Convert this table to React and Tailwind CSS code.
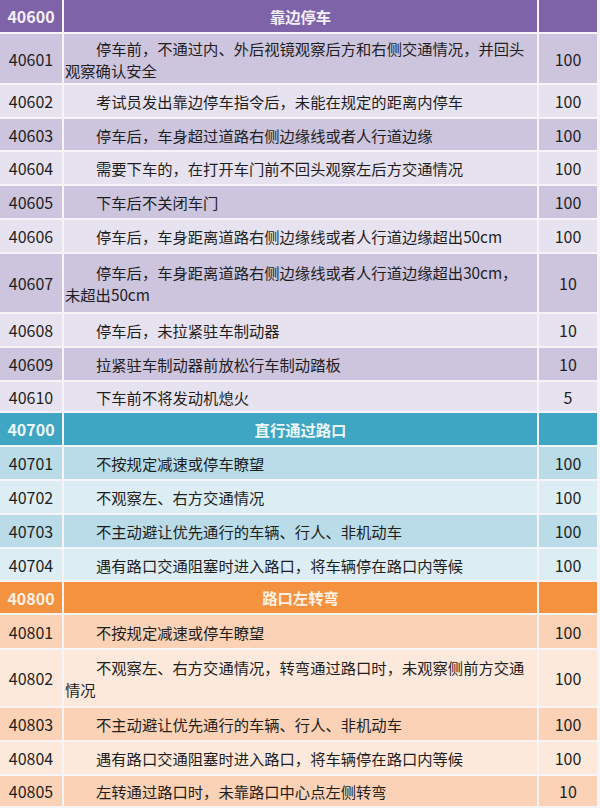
import React from "react";

const themes = {
  purple: { head: "bg-[#7e63a9]", odd: "bg-[#cdc4de]", even: "bg-[#e7e2ef]", headText: "text-[#f4f0f8]" },
  teal: { head: "bg-[#3ea5c3]", odd: "bg-[#b9dce8]", even: "bg-[#dcedf4]", headText: "text-[#eef8fb]" },
  orange: { head: "bg-[#f4923f]", odd: "bg-[#fbd2b5]", even: "bg-[#fde9db]", headText: "text-[#fff1e6]" },
};

const sections = [
  {
    theme: "purple",
    code: "40600",
    title: "靠边停车",
    h: "h-[32px]",
    rows: [
      { code: "40601", lines: ["停车前，不通过内、外后视镜观察后方和右侧交通情况，并回头", "观察确认安全"], score: "100", h: "h-[49px]" },
      { code: "40602", lines: ["考试员发出靠边停车指令后，未能在规定的距离内停车"], score: "100", h: "h-[32px]" },
      { code: "40603", lines: ["停车后，车身超过道路右侧边缘线或者人行道边缘"], score: "100", h: "h-[31px]" },
      { code: "40604", lines: ["需要下车的，在打开车门前不回头观察左后方交通情况"], score: "100", h: "h-[32px]" },
      { code: "40605", lines: ["下车后不关闭车门"], score: "100", h: "h-[32px]" },
      { code: "40606", lines: ["停车后，车身距离道路右侧边缘线或者人行道边缘超出50cm"], score: "100", h: "h-[32px]" },
      { code: "40607", lines: ["停车后，车身距离道路右侧边缘线或者人行道边缘超出30cm，", "未超出50cm"], score: "10", h: "h-[58px]" },
      { code: "40608", lines: ["停车后，未拉紧驻车制动器"], score: "10", h: "h-[32px]" },
      { code: "40609", lines: ["拉紧驻车制动器前放松行车制动踏板"], score: "10", h: "h-[32px]" },
      { code: "40610", lines: ["下车前不将发动机熄火"], score: "5", h: "h-[29px]" },
    ],
  },
  {
    theme: "teal",
    code: "40700",
    title: "直行通过路口",
    h: "h-[32px]",
    rows: [
      { code: "40701", lines: ["不按规定减速或停车瞭望"], score: "100", h: "h-[32px]" },
      { code: "40702", lines: ["不观察左、右方交通情况"], score: "100", h: "h-[32px]" },
      { code: "40703", lines: ["不主动避让优先通行的车辆、行人、非机动车"], score: "100", h: "h-[32px]" },
      { code: "40704", lines: ["遇有路口交通阻塞时进入路口，将车辆停在路口内等候"], score: "100", h: "h-[31px]" },
    ],
  },
  {
    theme: "orange",
    code: "40800",
    title: "路口左转弯",
    h: "h-[31px]",
    rows: [
      { code: "40801", lines: ["不按规定减速或停车瞭望"], score: "100", h: "h-[33px]" },
      { code: "40802", lines: ["不观察左、右方交通情况，转弯通过路口时，未观察侧前方交通", "情况"], score: "100", h: "h-[56px]" },
      { code: "40803", lines: ["不主动避让优先通行的车辆、行人、非机动车"], score: "100", h: "h-[32px]" },
      { code: "40804", lines: ["遇有路口交通阻塞时进入路口，将车辆停在路口内等候"], score: "100", h: "h-[32px]" },
      { code: "40805", lines: ["左转通过路口时，未靠路口中心点左侧转弯"], score: "10", h: "h-[30px]" },
    ],
  },
];

const rowGrid = "grid grid-cols-[62px_473px_58px] gap-x-[2px] mb-[2px]";

function HeaderRow({ s }) {
  const t = themes[s.theme];
  return (
    <div className={`${rowGrid} ${s.h}`}>
      <div className={`${t.head} ${t.headText} flex items-center justify-center font-bold text-[16px]`}>{s.code}</div>
      <div className={`${t.head} ${t.headText} flex items-center justify-center font-bold text-[15.3px]`}>{s.title}</div>
      <div className={`${t.head}`}></div>
    </div>
  );
}

function DataRow({ r, bg }) {
  return (
    <div className={`${rowGrid} ${r.h}`}>
      <div className={`${bg} flex items-center justify-center text-[16px]`}>{r.code}</div>
      <div className={`${bg} flex flex-col justify-center pl-[1px] text-[15.3px] leading-[22px]`}>
        {r.lines.map((l, i) => (
          <div key={i} className={`whitespace-nowrap ${i === 0 ? "pl-[31px]" : ""}`}>{l}</div>
        ))}
      </div>
      <div className={`${bg} flex items-center justify-center text-[16px]`}>{r.score}</div>
    </div>
  );
}

export default function App() {
  return (
    <div
      className="w-[600px] h-[808px] overflow-hidden bg-[#f6f4f7] text-[#1e1e1e]"
      style={{ fontFamily: '"Noto Sans CJK SC", "Noto Sans", sans-serif' }}
    >
      {sections.map((s) => {
        const t = themes[s.theme];
        return (
          <React.Fragment key={s.code}>
            <HeaderRow s={s} />
            {s.rows.map((r, i) => (
              <DataRow key={r.code} r={r} bg={i % 2 === 0 ? t.odd : t.even} />
            ))}
          </React.Fragment>
        );
      })}
    </div>
  );
}
